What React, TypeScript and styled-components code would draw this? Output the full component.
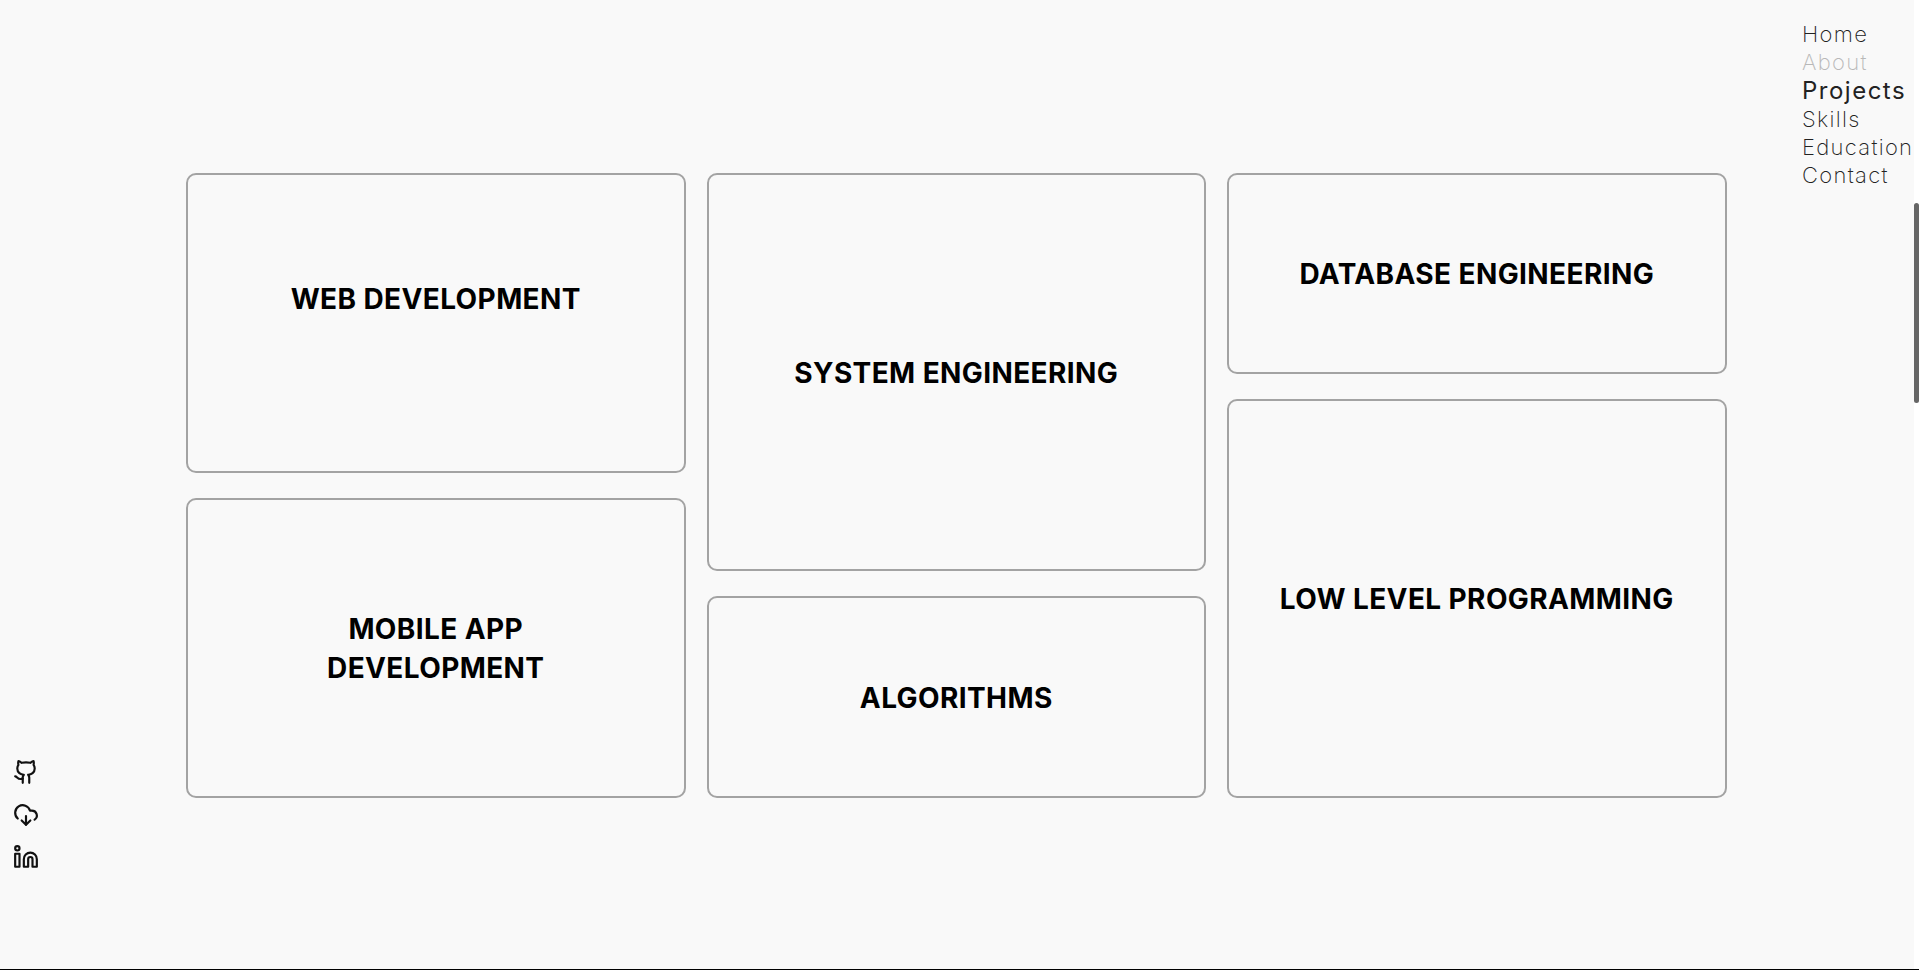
import React from "react";
import styled, { createGlobalStyle } from "styled-components";
import { CloudDownload, Github, Linkedin } from "lucide-react";

const GlobalStyle = createGlobalStyle`
  html, body {
    margin: 0;
    padding: 0;
    height: 100%;
    overflow: hidden;
    background: #f9f9f9;
  }
  * {
    box-sizing: border-box;
  }
`;

const Page = styled.div`
  position: relative;
  display: flex;
  height: 970px;
  border-bottom: 1px solid #000;
  background: #f9f9f9;
  font-family: "Inter", "Liberation Sans", sans-serif;
`;

const Main = styled.main`
  flex: 1;
  display: flex;
  justify-content: center;
  padding: 173px 1.5px 0 0;
`;

const Grid = styled.div`
  display: grid;
  grid-template-columns: repeat(3, 499.5px);
  column-gap: 21px;
  height: 625px;
`;

const Column = styled.div<{ $rows: string }>`
  display: grid;
  grid-template-rows: ${(p) => p.$rows};
  row-gap: 25px;
`;

const Card = styled.div`
  display: flex;
  align-items: center;
  justify-content: center;
  padding: 2px 40px 0;
  border: 2px solid #a3a3a3;
  border-radius: 10px;
`;

const Title = styled.h2<{ $raised?: boolean }>`
  margin: 0 0 ${(p) => (p.$raised ? 50 : 0)}px;
  font-size: 28px;
  font-weight: 700;
  line-height: 39px;
  letter-spacing: 0.4px;
  text-align: center;
  white-space: pre-line;
  color: #000;
`;

const Nav = styled.nav`
  position: absolute;
  top: 20px;
  left: 1802px;
  display: flex;
  flex-direction: column;
`;

const NavLink = styled.a<{ $state?: "active" | "faded" }>`
  font-size: ${(p) => (p.$state === "active" ? 24 : 22)}px;
  line-height: 28.3px;
  font-weight: ${(p) => (p.$state === "active" ? 400 : 250)};
  letter-spacing: ${(p) => (p.$state === "active" ? 1.5 : 1.3)}px;
  color: ${(p) =>
    p.$state === "active" ? "#222" : p.$state === "faded" ? "#b8b8b8" : "#222"};
`;

const Social = styled.div`
  position: absolute;
  left: 13px;
  top: 759px;
  display: flex;
  flex-direction: column;
  gap: 16.5px;
  color: #111;
`;

const Track = styled.div`
  position: relative;
  width: 5px;
  background: #fff;
`;

const Thumb = styled.div`
  position: absolute;
  top: 203px;
  left: 0;
  width: 5px;
  height: 200px;
  border-radius: 3px;
  background: #666;
`;

const columns = [
  { rows: "1fr 1fr", items: ["WEB DEVELOPMENT", "MOBILE APP\nDEVELOPMENT"] },
  { rows: "398px 1fr", items: ["SYSTEM ENGINEERING", "ALGORITHMS"] },
  { rows: "201px 1fr", items: ["DATABASE ENGINEERING", "LOW LEVEL PROGRAMMING"] },
];

const links = ["Home", "About", "Projects", "Skills", "Education", "Contact"];

export default function App() {
  return (
    <Page>
      <GlobalStyle />
      <Main>
        <Grid>
          {columns.map((col) => (
            <Column key={col.items[0]} $rows={col.rows}>
              {col.items.map((item) => (
                <Card key={item}>
                  <Title $raised={item === "WEB DEVELOPMENT"}>{item}</Title>
                </Card>
              ))}
            </Column>
          ))}
        </Grid>
      </Main>
      <Nav>
        {links.map((l) => (
          <NavLink
            key={l}
            $state={l === "Projects" ? "active" : l === "About" ? "faded" : undefined}
          >
            {l}
          </NavLink>
        ))}
      </Nav>
      <Social>
        <Github size={26} />
        <CloudDownload size={26} />
        <Linkedin size={26} />
      </Social>
      <Track>
        <Thumb />
      </Track>
    </Page>
  );
}
